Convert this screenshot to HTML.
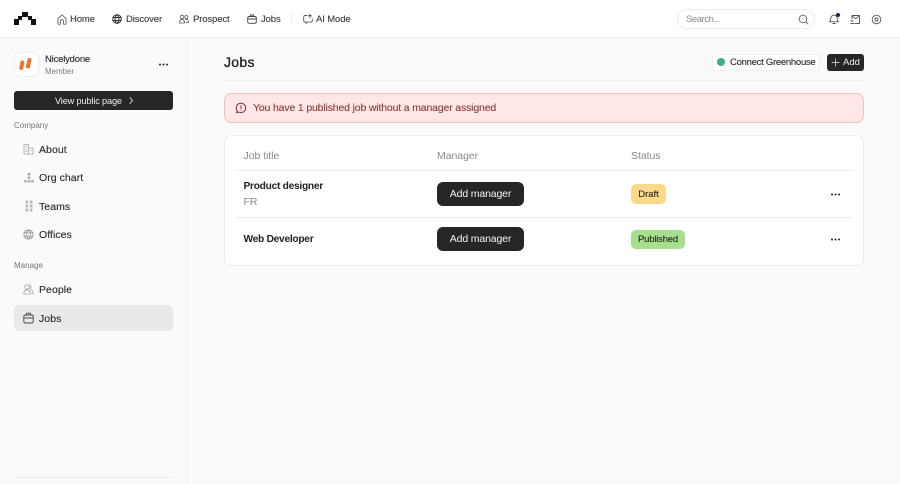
<!DOCTYPE html>
<html lang="en"><head><meta charset="utf-8"><title>Jobs</title>
<style>
html,body{margin:0;padding:0;width:900px;height:484px;overflow:hidden;background:#fafafa;font-family:"Liberation Sans",sans-serif;color:#1c1c1c}
div,span,svg{position:absolute;box-sizing:border-box}
.t{white-space:nowrap;line-height:14px;height:14px}
svg{fill:none;stroke-linecap:round;stroke-linejoin:round}
.nav{font-size:9.5px;color:#3c3c3c;top:13px;letter-spacing:-.12px;-webkit-text-stroke:.12px #3c3c3c}
.side{font-size:10.5px;color:#2a2a2a;left:39px;letter-spacing:.05px;-webkit-text-stroke:.12px #2a2a2a}
.sec{font-size:8px;color:#777;left:14px;letter-spacing:0}
.th{font-size:10.5px;color:#8a8a8a;top:149px;letter-spacing:-.05px}
.btn{background:#262624;border-radius:6px;color:#f5f5f5;font-size:10.5px;text-align:center;left:437px;width:87px;height:24px;line-height:25px;letter-spacing:-.15px}
.dots{width:9px;height:3px}
.b{font-size:10.2px;font-weight:700;color:#222;letter-spacing:-.27px}
</style></head><body>
<div style="left:0;top:0;width:900px;height:38px;background:#fff;border-bottom:1px solid #efefef"></div>
<svg style="left:14px;top:12px" width="22" height="13" viewBox="0 0 22 13"><path d="M8 0h6v4h4v3h4v6h-5V8h-3V5H8v3H5v5H0V7h4V4h4z" fill="#111"/></svg>

<svg style="left:57px;top:14px" width="10" height="11" viewBox="0 0 11 12" stroke="#555" stroke-width=".9"><path d="M1 5l4.500-4L10 5v5.500a.7.7 0 0 1-.7.7H7.300V8a1.800 1.800 0 0 0-3.600 0v3.200H1.700a.7.7 0 0 1-.7-.7z"/></svg>
<span class="t nav" style="left:70px">Home</span>
<svg style="left:112px;top:14px" width="10" height="10" viewBox="0 0 10 10" stroke="#333" stroke-width="1"><circle cx="5" cy="5" r="4.300"/><path d="M.8 3.500h8.400M.8 6.500h8.400M5 .7c-2.600 2.600-2.600 6 0 8.600M5 .7c2.600 2.600 2.600 6 0 8.600"/></svg>
<span class="t nav" style="left:126px">Discover</span>
<svg style="left:179px;top:14px" width="10" height="10" viewBox="0 0 10 10" stroke="#555" stroke-width=".8"><circle cx="3" cy="3" r="1.800"/><circle cx="7.300" cy="3" r="1.500"/><path d="M.5 9c0-2.800 1.200-3.700 2.500-3.700S5.500 6.200 5.500 9zM6.500 5.400c1.800-.4 3 .8 3 3.200H7"/></svg>
<span class="t nav" style="left:193px">Prospect</span>
<svg style="left:247px;top:14px" width="10" height="10" viewBox="0 0 10 10" stroke="#444" stroke-width=".9"><rect x=".7" y="2.500" width="8.600" height="6.800" rx="1.500"/><path d="M3.200 2.500V1h3.600v1.500M.9 5h8.200"/></svg>
<span class="t nav" style="left:261px">Jobs</span>
<div style="left:291px;top:13px;width:1px;height:12px;background:#eee"></div>
<svg style="left:303px;top:14px" width="10" height="10" viewBox="0 0 10 10" stroke="#555" stroke-width=".9"><path d="M4 1.500H2a1.300 1.300 0 0 0-1.300 1.300v4A1.300 1.300 0 0 0 2 8.100h1V9.300l1.500-1.200H8a1.300 1.300 0 0 0 1.300-1.300V5M7 .6v3.300M5.600 2.100L7 .6l1.400 1.500"/></svg>
<span class="t nav" style="left:316px">AI Mode</span>

<div style="left:677px;top:9px;width:138px;height:20px;border:1px solid #ececec;border-radius:10px;background:#fff"></div>
<span class="t" style="left:686px;top:12.500px;font-size:9.5px;color:#8a8a8a;letter-spacing:-.45px">Search...</span>
<svg style="left:798px;top:14px" width="11" height="11" viewBox="0 0 11 11" stroke="#666" stroke-width=".9"><circle cx="5" cy="5" r="3.800"/><path d="M8 8l2 2"/></svg>
<svg style="left:828px;top:13px" width="12" height="12" viewBox="0 0 12 12" stroke="#555" stroke-width=".9"><path d="M1.500 8.800c1-1 1.300-1.800 1.300-3.500a3.200 3.200 0 0 1 6.400 0c0 1.700.3 2.500 1.300 3.500zM4.800 10.500h2.400"/></svg>
<div style="left:836px;top:13px;width:4px;height:4px;border-radius:50%;background:#16264c"></div>
<svg style="left:850px;top:14px" width="11" height="11" viewBox="0 0 11 11" stroke="#555" stroke-width=".9"><path d="M2 5V1.500h7.500V9.500H5M2 1.800l3.800 3 3.500-3M.8 7h2.500M.8 9.500h3"/></svg>
<svg style="left:871px;top:14px" width="11" height="11" viewBox="0 0 11 11" stroke="#555" stroke-width=".9"><circle cx="5.500" cy="5.500" r="4.300"/><circle cx="5.500" cy="5.500" r="1.500"/></svg>

<div style="left:187px;top:38px;width:1px;height:446px;background:#eeeeee"></div>

<div style="left:14px;top:52px;width:25px;height:25px;border-radius:6px;background:#fff;border:1px solid #eee"></div>
<svg style="left:19px;top:57px" width="15" height="15" viewBox="0 0 15 15" stroke="#ed7420" stroke-width="4"><path d="M3.300 5.500L2.300 11M10.500 3L9 9.500"/></svg>
<span class="t" style="left:45px;top:53px;font-size:9.5px;color:#2a2a2a;letter-spacing:-.2px;-webkit-text-stroke:.12px #2a2a2a">Nicelydone</span>
<span class="t" style="left:45px;top:65px;font-size:8px;color:#808080;letter-spacing:-.05px">Member</span>
<svg class="dots" style="left:159px;top:63px" viewBox="0 0 9 3"><circle cx="1" cy="1.500" r="1" fill="#222"/><circle cx="4.500" cy="1.500" r="1" fill="#222"/><circle cx="8" cy="1.500" r="1" fill="#222"/></svg>
<div style="left:14px;top:91px;width:159px;height:19px;background:#262624;border-radius:3px"></div>
<span class="t" style="left:55px;top:94px;font-size:9.2px;color:#eee;letter-spacing:-.15px">View public page</span>
<svg style="left:128px;top:96px" width="6" height="9" viewBox="0 0 6 9" stroke="#ddd" stroke-width=".9"><path d="M2 1.500l2.500 3-2.500 3"/></svg>

<span class="t sec" style="top:119px">Company</span>
<svg style="left:23px;top:143px" width="11" height="12" viewBox="0 0 11 12" stroke="#a8a8a8" stroke-width=".8"><path d="M1 11V1.500h4.500V11zM5.500 5H10v6H5.500zM2.500 3.500h1.500M2.500 6h1.500M2.500 8.500h1.500M7 7.500h1.500"/></svg>
<span class="t side" style="top:143px">About</span>
<svg style="left:24px;top:172px" width="10" height="11" viewBox="0 0 10 11"><rect x="3.700" y="1" width="2.600" height="2.500" fill="#aaa"/><rect x="3.700" y="4.500" width="2.600" height="2.500" fill="#aaa"/><rect x=".2" y="8" width="2.500" height="2.500" fill="#aaa"/><rect x="3.700" y="8" width="2.600" height="2.500" fill="#aaa"/><rect x="7.300" y="8" width="2.500" height="2.500" fill="#aaa"/></svg>
<span class="t side" style="top:171px">Org chart</span>
<svg style="left:25px;top:200px" width="8" height="12" viewBox="0 0 8 12"><path d="M.5.500h2.700v3H.5zM4.800.500h2.700v3H4.800zM.5 4.500h2.700v3H.5zM4.800 4.500h2.700v3H4.800zM.5 8.500h2.700v3H.5zM4.800 8.500h2.700v3H4.800z" fill="#bbb"/></svg>
<span class="t side" style="top:200px">Teams</span>
<svg style="left:23px;top:229px" width="11" height="11" viewBox="0 0 11 11" stroke="#999" stroke-width=".9"><circle cx="5.500" cy="5.500" r="4.600"/><path d="M1 3.800h9M1 7.200h9M5.500 1c-2.800 2.800-2.800 6.200 0 9M5.500 1c2.800 2.800 2.800 6.200 0 9"/></svg>
<span class="t side" style="top:228px">Offices</span>

<span class="t sec" style="top:259px">Manage</span>
<svg style="left:23px;top:284px" width="11" height="11" viewBox="0 0 11 11" stroke="#a0a0a0" stroke-width=".8"><circle cx="4" cy="3" r="2.200"/><path d="M.8 10c0-3 1.300-4.300 3.200-4.300S7.200 7 7.200 10zM6.800 1a2.200 2.200 0 0 1 0 4M8 6c1.500.5 2.300 1.800 2.300 3.500H8.300"/></svg>
<span class="t side" style="top:283px">People</span>
<div style="left:14px;top:305px;width:159px;height:26px;background:#e9e9e9;border-radius:5px"></div>
<svg style="left:23px;top:312px" width="11" height="12" viewBox="0 0 11 12" stroke="#444" stroke-width=".9"><rect x=".8" y="3" width="9.400" height="8" rx="1.600"/><path d="M3.500 3V1.200h4V3M1 6h9"/></svg>
<span class="t side" style="top:311.500px">Jobs</span>
<div style="left:14px;top:477px;width:159px;height:1px;background:#e9e9e9"></div>

<span class="t" style="left:224px;top:54px;height:16px;line-height:16px;font-size:14px;color:#1c1c1c;letter-spacing:.3px;-webkit-text-stroke:.3px #1c1c1c">Jobs</span>
<div style="left:224px;top:80px;width:640px;height:1px;background:#eeeeee"></div>
<div style="left:712px;top:54px;width:108px;height:17px;background:#fff;border:1px solid #eee;border-radius:3px"></div>
<div style="left:717px;top:58px;width:8px;height:8px;border-radius:50%;background:#3cab8a"></div>
<span class="t" style="left:730px;top:55.500px;font-size:9.5px;color:#2a2a2a;letter-spacing:-.27px;-webkit-text-stroke:.12px #2a2a2a">Connect Greenhouse</span>
<div style="left:827px;top:54px;width:37px;height:17px;background:#262624;border-radius:3px"></div>
<svg style="left:831px;top:58px" width="9" height="9" viewBox="0 0 9 9" stroke="#ccc" stroke-width=".9"><path d="M4.500 1v7M1 4.500h7"/></svg>
<span class="t" style="left:843px;top:55.500px;font-size:9.5px;color:#eee;letter-spacing:0">Add</span>

<div style="left:224px;top:93px;width:640px;height:30px;background:#fee7e5;border:1px solid #eec3be;border-radius:7px"></div>
<svg style="left:235px;top:102px" width="12" height="12" viewBox="0 0 12 12" stroke="#8e2a2c" stroke-width="1"><path d="M6 1.200a4.700 4.700 0 1 1-2.300 8.800L1.500 10.700l.6-2.100A4.700 4.700 0 0 1 6 1.200zM6 3.800v2.600M6 8.200v.1"/></svg>
<span class="t" style="left:253px;top:101px;font-size:10.5px;color:#933a3c;letter-spacing:-.16px;-webkit-text-stroke:.12px #933a3c">You have 1 published job without a manager assigned</span>

<div style="left:224px;top:135px;width:640px;height:131px;background:#fff;border:1px solid #ebebeb;border-radius:7px"></div>
<span class="t th" style="left:243.500px">Job title</span>
<span class="t th" style="left:437px">Manager</span>
<span class="t th" style="left:631px">Status</span>
<div style="left:236px;top:170px;width:617px;height:1px;background:#ececec"></div>
<div style="left:236px;top:217px;width:617px;height:1px;background:#ececec"></div>

<span class="t b" style="left:243.500px;top:180px">Product designer</span>
<span class="t" style="left:243.500px;top:195px;font-size:10.500px;color:#8a8a8a;letter-spacing:0">FR</span>
<div class="btn" style="top:182px">Add manager</div>
<div style="left:631px;top:184px;width:35px;height:20px;background:#fcd988;border-radius:5px;font-size:9.5px;line-height:21px;text-align:center;color:#2a2a2a;letter-spacing:0;-webkit-text-stroke:.12px #2a2a2a">Draft</div>
<svg class="dots" style="left:831px;top:193px" viewBox="0 0 9 3"><circle cx="1" cy="1.500" r="1" fill="#222"/><circle cx="4.500" cy="1.500" r="1" fill="#222"/><circle cx="8" cy="1.500" r="1" fill="#222"/></svg>

<span class="t b" style="left:243.500px;top:233px">Web Developer</span>
<div class="btn" style="top:227px">Add manager</div>
<div style="left:631px;top:230px;width:54px;height:19px;background:#a6e08f;border-radius:5px;font-size:9.5px;line-height:19px;text-align:center;color:#1c2a16;letter-spacing:-.2px;-webkit-text-stroke:.12px #1c2a16">Published</div>
<svg class="dots" style="left:831px;top:238px" viewBox="0 0 9 3"><circle cx="1" cy="1.500" r="1" fill="#222"/><circle cx="4.500" cy="1.500" r="1" fill="#222"/><circle cx="8" cy="1.500" r="1" fill="#222"/></svg>
</body></html>
